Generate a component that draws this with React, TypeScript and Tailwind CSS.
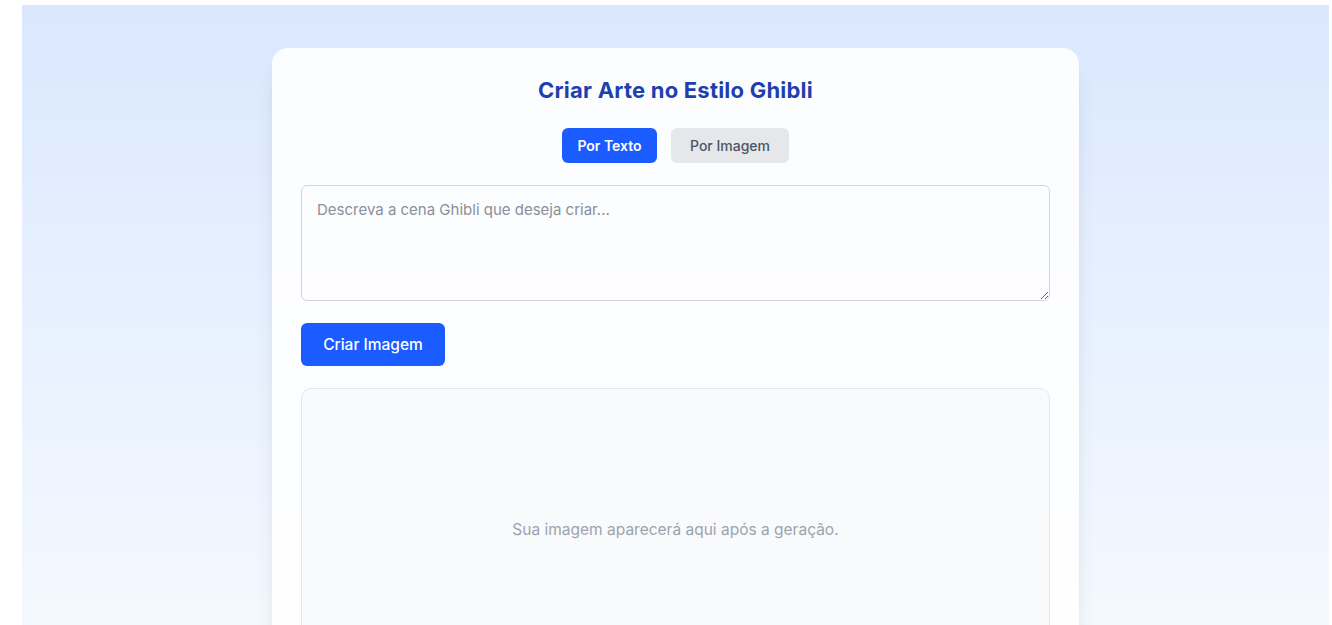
export default function App() {
  return (
    <div className="bg-white pl-[22px] pt-[5px] pr-[3px] h-[625px] overflow-hidden" style={{ fontFamily: "Inter, 'Noto Sans', sans-serif" }}>
      <div className="h-[700px] bg-gradient-to-b from-[#dae8fe] to-[#f8fbff] pt-[43px]">
        <div className="mx-auto w-[807px] bg-white/90 rounded-2xl shadow-xl px-[29px] pt-[26px] pb-8">
          <h1 className="text-center text-[22px] leading-8 font-bold text-[#1e40af] tracking-[0.01em]">
            Criar Arte no Estilo Ghibli
          </h1>

          <div className="flex justify-center gap-[14px] mt-[22px]">
            <button className="h-[35px] w-[95px] rounded-md bg-[#1a5cff] text-white text-[14px] font-semibold">
              Por Texto
            </button>
            <button className="h-[35px] w-[118px] rounded-md bg-[#e5e7eb] text-[#4b5563] text-[14px] font-medium">
              Por Imagem
            </button>
          </div>

          <textarea
            className="mt-[22px] block w-full h-[116px] rounded-md border border-[#d1d5db] bg-transparent px-[15px] py-[13px] text-[15px] placeholder:text-[#8b8f97] outline-none"
            placeholder="Descreva a cena Ghibli que deseja criar..."
          />

          <button className="mt-[22px] h-[43px] w-[144px] rounded-md bg-[#1a5cff] text-white text-[15.5px] font-medium">
            Criar Imagem
          </button>

          <div className="mt-[22px] h-[284px] rounded-[10px] border border-[#e5e7eb] bg-[#f9fafb] flex items-center justify-center">
            <p className="text-[15.5px] text-[#9ca3af]">Sua imagem aparecerá aqui após a geração.</p>
          </div>
        </div>
      </div>
    </div>
  );
}
